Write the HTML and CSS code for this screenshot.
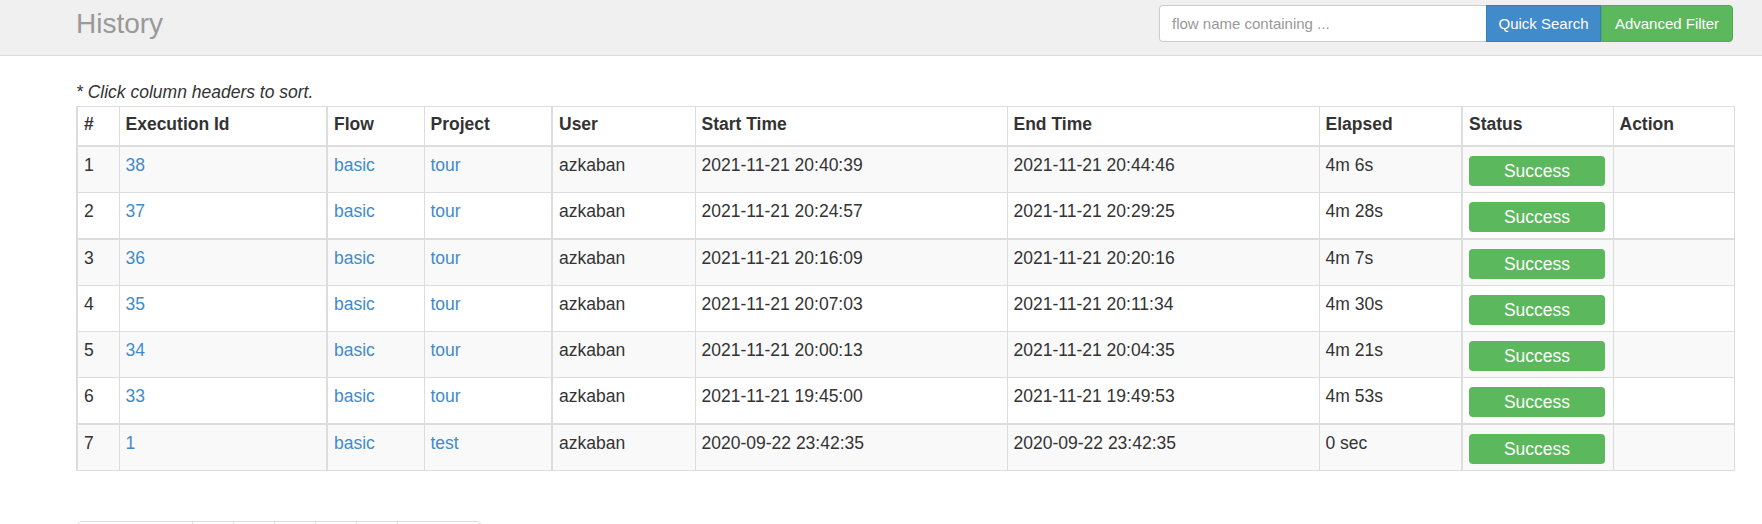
FILE: index.html
```html
<!DOCTYPE html>
<html lang="en">
<head>
<meta charset="utf-8">
<title>History</title>
<link rel="stylesheet" href="styles.css">
</head>
<body>
<header class="page-header">
  <div class="header-inner">
    <h1 class="page-title">History</h1>
    <form class="search-form">
      <input class="search-input" type="text" placeholder="flow name containing ...">
      <button class="btn btn-primary" type="button">Quick Search</button>
      <button class="btn btn-success btn-last" type="button">Advanced Filter</button>
    </form>
  </div>
</header>
<main class="content">
  <p class="note">* Click column headers to sort.</p>
  <table class="history-table">
    <colgroup>
      <col class="c-num"><col class="c-id"><col class="c-flow"><col class="c-project"><col class="c-user">
      <col class="c-start"><col class="c-end"><col class="c-elapsed"><col class="c-status"><col class="c-action">
    </colgroup>
    <thead>
      <tr><th>#</th><th>Execution Id</th><th>Flow</th><th>Project</th><th>User</th><th>Start Time</th><th>End Time</th><th>Elapsed</th><th>Status</th><th>Action</th></tr>
    </thead>
    <tbody>
      <tr class="odd"><td>1</td><td><a href="#">38</a></td><td><a href="#">basic</a></td><td><a href="#">tour</a></td><td>azkaban</td><td>2021-11-21 20:40:39</td><td>2021-11-21 20:44:46</td><td>4m 6s</td><td><div class="status">Success</div></td><td></td></tr>
      <tr class="thick"><td>2</td><td><a href="#">37</a></td><td><a href="#">basic</a></td><td><a href="#">tour</a></td><td>azkaban</td><td>2021-11-21 20:24:57</td><td>2021-11-21 20:29:25</td><td>4m 28s</td><td><div class="status">Success</div></td><td></td></tr>
      <tr class="odd"><td>3</td><td><a href="#">36</a></td><td><a href="#">basic</a></td><td><a href="#">tour</a></td><td>azkaban</td><td>2021-11-21 20:16:09</td><td>2021-11-21 20:20:16</td><td>4m 7s</td><td><div class="status">Success</div></td><td></td></tr>
      <tr><td>4</td><td><a href="#">35</a></td><td><a href="#">basic</a></td><td><a href="#">tour</a></td><td>azkaban</td><td>2021-11-21 20:07:03</td><td>2021-11-21 20:11:34</td><td>4m 30s</td><td><div class="status">Success</div></td><td></td></tr>
      <tr class="odd"><td>5</td><td><a href="#">34</a></td><td><a href="#">basic</a></td><td><a href="#">tour</a></td><td>azkaban</td><td>2021-11-21 20:00:13</td><td>2021-11-21 20:04:35</td><td>4m 21s</td><td><div class="status">Success</div></td><td></td></tr>
      <tr class="thick"><td>6</td><td><a href="#">33</a></td><td><a href="#">basic</a></td><td><a href="#">tour</a></td><td>azkaban</td><td>2021-11-21 19:45:00</td><td>2021-11-21 19:49:53</td><td>4m 53s</td><td><div class="status">Success</div></td><td></td></tr>
      <tr class="odd"><td>7</td><td><a href="#">1</a></td><td><a href="#">basic</a></td><td><a href="#">test</a></td><td>azkaban</td><td>2020-09-22 23:42:35</td><td>2020-09-22 23:42:35</td><td>0 sec</td><td><div class="status">Success</div></td><td></td></tr>
    </tbody>
  </table>
  <ul class="pagination">
    <li class="page first"><a href="#">&larr;Previous</a></li>
    <li class="page"><a href="#">1</a></li>
    <li class="page"><a href="#">2</a></li>
    <li class="page"><a href="#">3</a></li>
    <li class="page"><a href="#">4</a></li>
    <li class="page"><a href="#">5</a></li>
    <li class="page last"><a href="#">Next&rarr;</a></li>
  </ul>
</main>
</body>
</html>
```
FILE: styles.css
```css
html, body {
  overflow: hidden;
}
body {
  margin: 0;
  font-family: "Liberation Sans", Arial, Helvetica, sans-serif;
  font-size: 17.5px;
  line-height: 25px;
  color: #333;
  background: #fff;
}
a {
  color: #428bca;
  text-decoration: none;
}

/* header */
.page-header {
  height: 55px;
  background: #f0f0f0;
  border-bottom: 1px solid #dcdcdc;
}
.header-inner {
  margin-left: 76px;
  width: 1657px;
  padding-top: 5px;
  display: flex;
  justify-content: space-between;
  align-items: flex-start;
}
.page-title {
  margin: 0;
  font-size: 28px;
  line-height: 37px;
  font-weight: normal;
  color: #999;
}
.search-form {
  display: flex;
  margin: 0;
}
.search-input {
  box-sizing: border-box;
  width: 327px;
  height: 37px;
  padding: 6px 12px;
  border: 1px solid #ccc;
  border-right: 0;
  border-radius: 4px 0 0 4px;
  font-family: inherit;
  font-size: 15px;
  color: #555;
  background: #fff;
  outline: none;
}
.search-input::placeholder {
  color: #999;
}
.btn {
  box-sizing: border-box;
  height: 37px;
  padding: 0;
  border: 1px solid transparent;
  font-family: inherit;
  font-size: 15px;
  color: #fff;
  white-space: nowrap;
  text-align: center;
  cursor: pointer;
}
.btn-primary {
  width: 115px;
  background: #428bca;
  border-color: #357ebd;
}
.btn-success {
  width: 132px;
  background: #5cb85c;
  border-color: #4cae4c;
}
.btn-last {
  border-radius: 0 4px 4px 0;
}

/* content */
.content {
  margin-left: 76px;
  padding-top: 24px;
}
.note {
  margin: 0 0 1px;
  font-style: italic;
}
.history-table {
  table-layout: fixed;
  width: 1657px;
  border-collapse: collapse;
  border-top: 1px solid #ddd;
  border-left: 2px solid #ddd;
  border-right: 1px solid #ddd;
  border-bottom: 1px solid #ddd;
}
.c-num { width: 42px; }
.c-id { width: 208px; }
.c-flow { width: 97px; }
.c-project { width: 128px; }
.c-user { width: 143px; }
.c-start { width: 312px; }
.c-end { width: 312px; }
.c-elapsed { width: 143px; }
.c-status { width: 151px; }
.c-action { width: 121px; }

.history-table th,
.history-table td {
  border: 1px solid #ddd;
  text-align: left;
  vertical-align: top;
  white-space: nowrap;
}
.history-table th {
  padding: 5px 6px 8px;
  font-weight: bold;
  border-bottom: 2px solid #ddd;
}
.history-table td {
  padding: 6px 6px 4px;
}
.history-table th:nth-child(2), .history-table td:nth-child(2),
.history-table th:nth-child(4), .history-table td:nth-child(4),
.history-table th:nth-child(8), .history-table td:nth-child(8) {
  border-right-width: 2px;
}
.history-table tr.odd td {
  background: #f9f9f9;
}
.history-table tr.thick td {
  border-bottom-width: 2px;
}
.status {
  width: 136px;
  height: 30px;
  margin: 3px 0 2px;
  border-radius: 4px;
  background: #5cb85c;
  color: #fff;
  text-align: center;
  line-height: 30px;
}

/* pagination */
.pagination {
  display: flex;
  list-style: none;
  margin: 50px 0 0 1px;
  padding: 0;
}
.page a {
  display: block;
  box-sizing: border-box;
  width: 42px;
  padding: 8px 0;
  text-align: center;
  border: 1px solid #ddd;
  margin-left: -1px;
  background: #fff;
}
.page.first a {
  width: 116px;
  margin-left: 0;
  border-radius: 5px 0 0 5px;
}
.page.last a {
  width: 85px;
  border-radius: 0 5px 5px 0;
}
```
